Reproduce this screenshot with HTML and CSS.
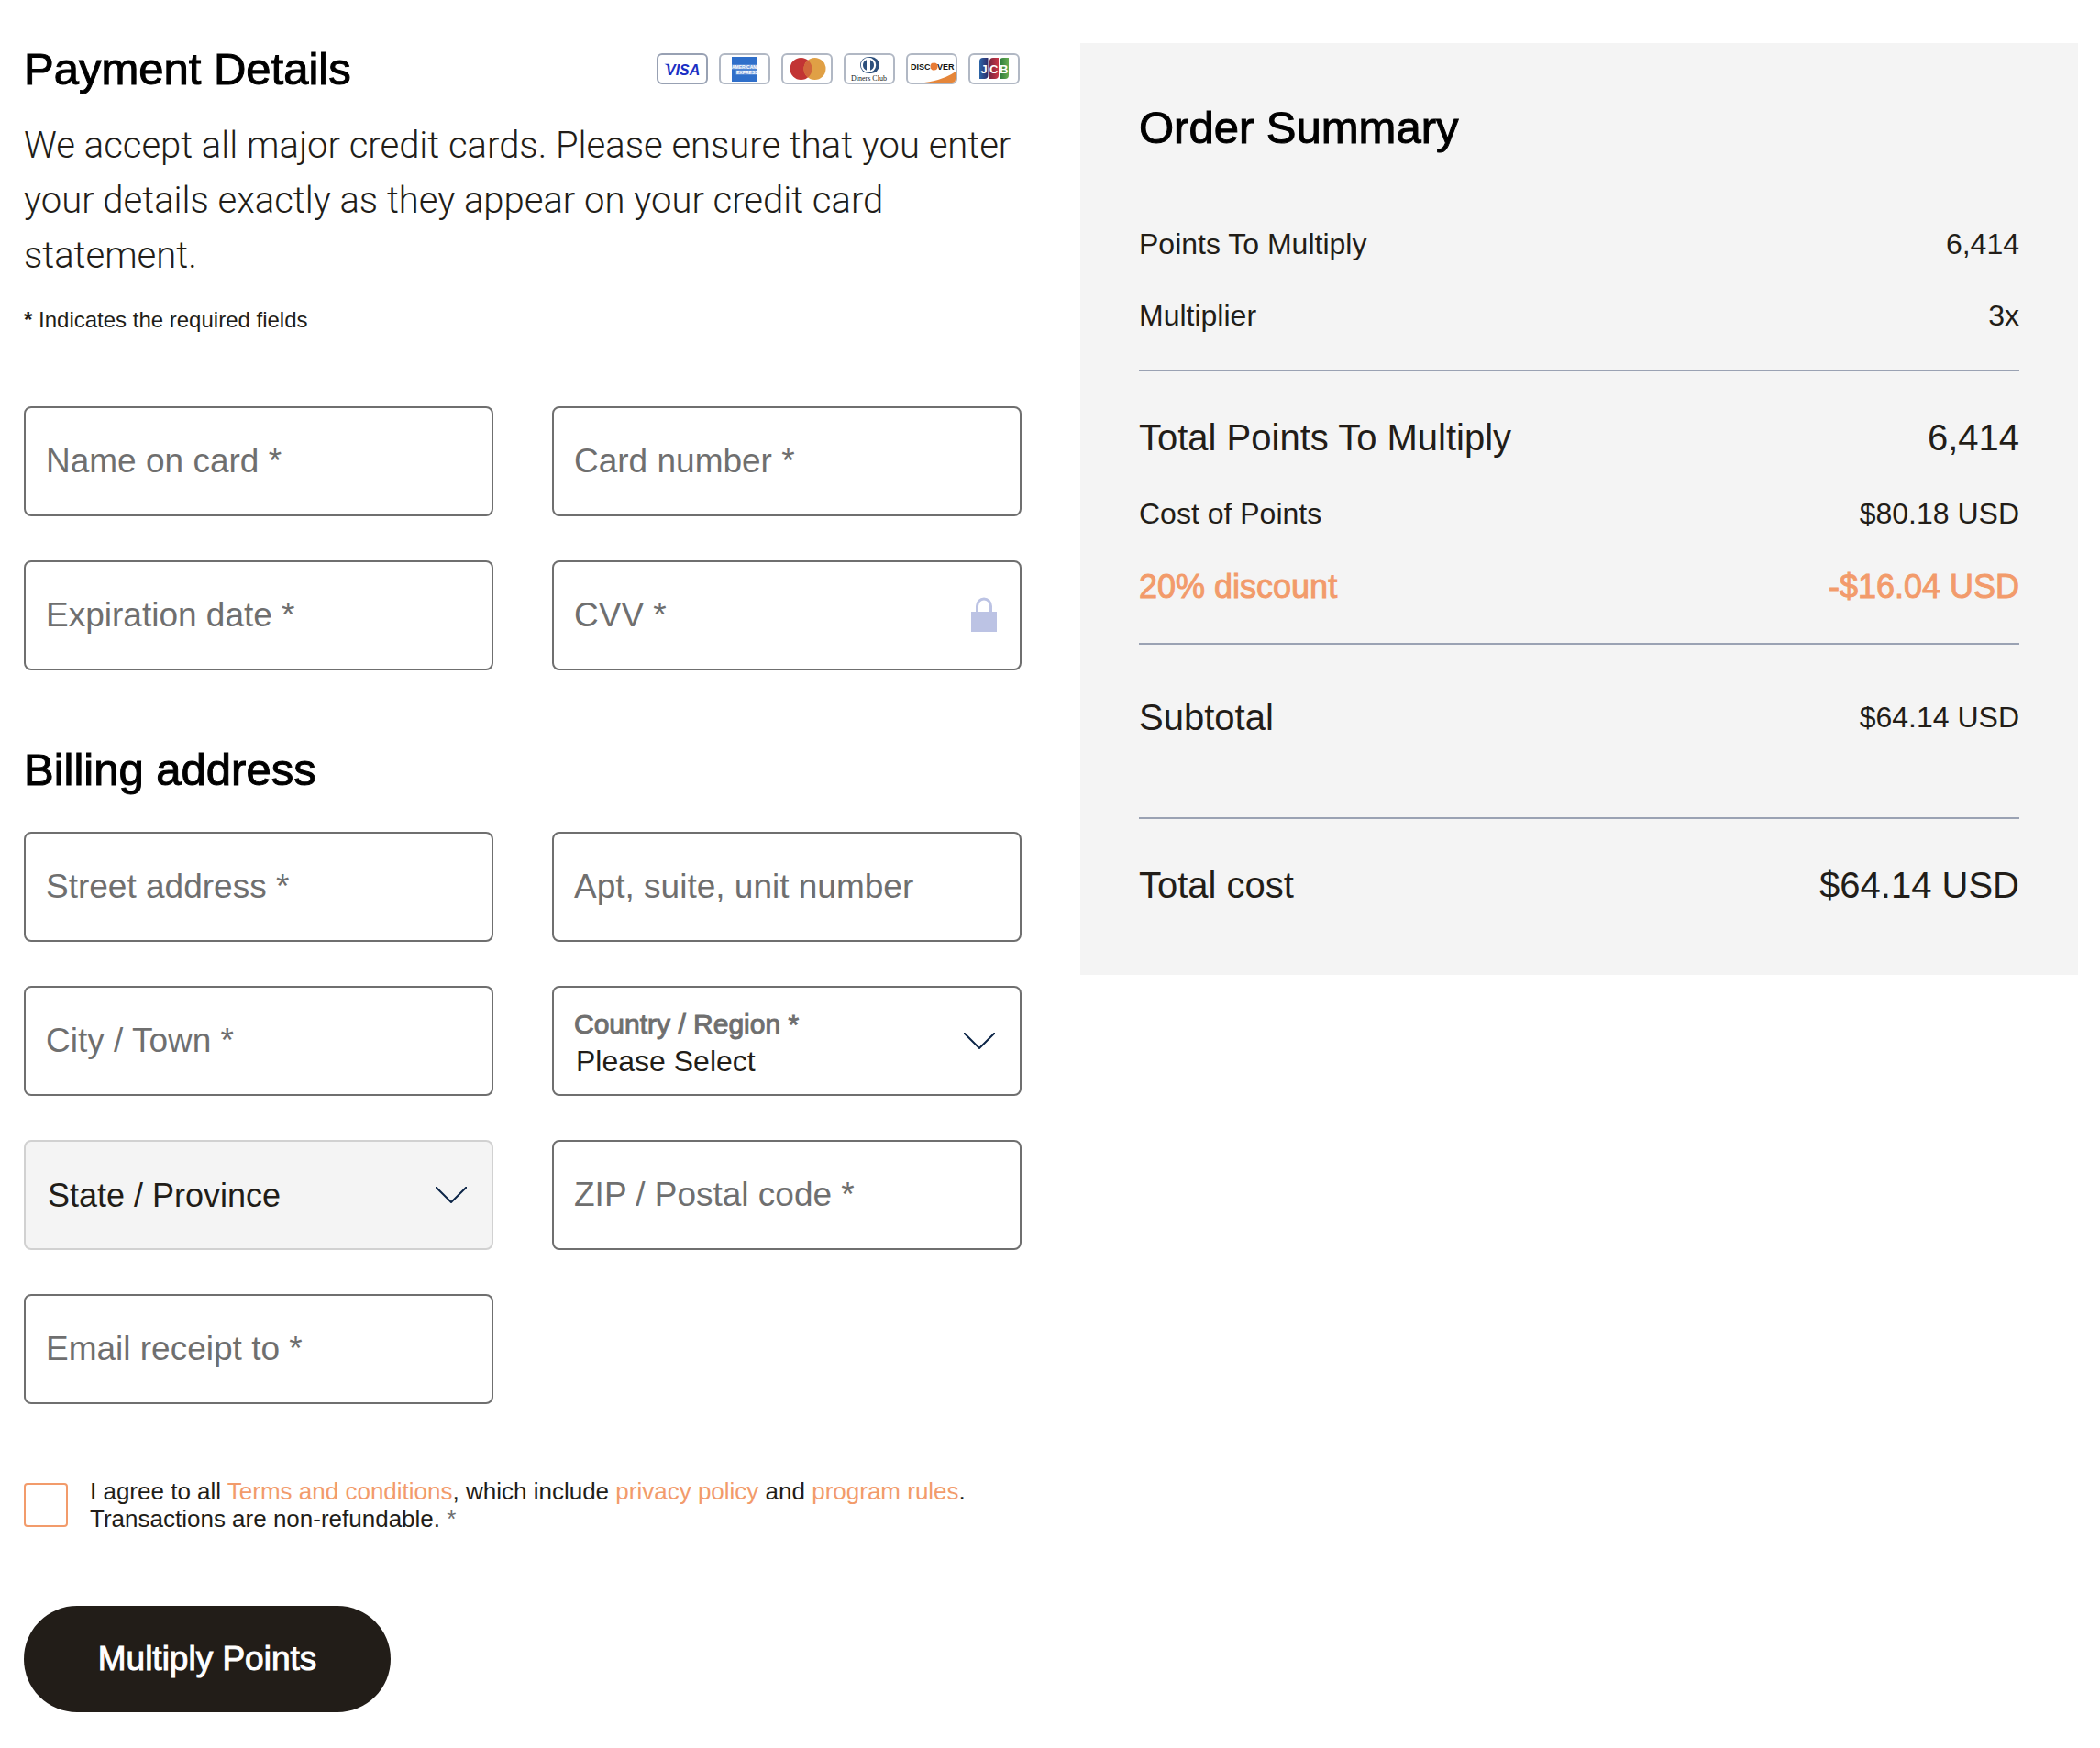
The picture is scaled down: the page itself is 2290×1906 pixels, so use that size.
FILE: index.html
```html
<!DOCTYPE html>
<html lang="en">
<head>
  <meta charset="UTF-8" />
  <meta name="viewport" content="width=device-width, initial-scale=1" />
  <title>Payment Details</title>
  <link rel="stylesheet" href="styles.css">
</head>
<body>
  <main class="checkout">
    <form class="payment">
      <header class="payment-header">
        <h2>Payment Details</h2>
        <ul class="cards">
          <li>
            <svg class="card" viewBox="0 0 56 34" role="img" aria-label="Visa">
              <rect class="card-frame card-frame-dark" x="1" y="1" width="54" height="32" rx="5" />
              <path d="M8.500 11.800h4.500l1.500 3z" fill="#1a2fc4" />
              <text x="10" y="23.500" font-size="16" font-weight="bold" font-style="italic" fill="#1a2fc4">VISA</text>
            </svg>
          </li>
          <li>
            <svg class="card" viewBox="0 0 56 34" role="img" aria-label="American Express">
              <rect class="card-frame" x="1" y="1" width="54" height="32" rx="5" />
              <rect x="14" y="4" width="28" height="27" fill="#2f6fca" />
              <rect x="14" y="12.500" width="27" height="5" fill="#fff" opacity=".35" />
              <rect x="18.500" y="18.500" width="23.500" height="5" fill="#fff" opacity=".35" />
              <text x="14" y="17" font-size="5" font-weight="bold" fill="#fff">AMERICAN</text>
              <text x="19" y="23" font-size="5" font-weight="bold" fill="#fff">EXPRESS</text>
            </svg>
          </li>
          <li>
            <svg class="card" viewBox="0 0 56 34" role="img" aria-label="Mastercard">
              <rect class="card-frame" x="1" y="1" width="54" height="32" rx="5" />
              <circle cx="21.500" cy="17" r="12" fill="#c23434" />
              <circle cx="36.500" cy="17" r="12" fill="#e0a045" />
              <path d="M29 7.600a12 12 0 0 1 0 18.800a12 12 0 0 1 0-18.800z" fill="#d1663b" />
            </svg>
          </li>
          <li>
            <svg class="card" viewBox="0 0 56 34" role="img" aria-label="Diners Club">
              <rect class="card-frame" x="1" y="1" width="54" height="32" rx="5" />
              <path d="M27 4h3a9 9 0 0 1 0 18h-3a9 9 0 0 1 0-18z" fill="#2c4f7c" />
              <circle cx="27" cy="13" r="8.200" fill="#fff" />
              <path d="M25 7.200a6.200 6.200 0 0 0 0 11.600zM29 7.200a6.200 6.200 0 0 1 0 11.600z" fill="#2c4f7c" />
              <text class="serif" x="8" y="29.500" font-size="8" fill="#222">Diners Club</text>
            </svg>
          </li>
          <li>
            <svg class="card" viewBox="0 0 56 34" role="img" aria-label="Discover">
              <rect class="card-frame" x="1" y="1" width="54" height="32" rx="5" />
              <path d="M20 32q22-3 34-12v8q0 4-4 4z" fill="#e5863a" />
              <text x="5" y="18" font-size="9" font-weight="bold" fill="#111">DISC</text>
              <text x="34" y="18" font-size="9" font-weight="bold" fill="#111">VER</text>
              <circle cx="30.500" cy="14.500" r="4" fill="#e87b35" />
            </svg>
          </li>
          <li>
            <svg class="card" viewBox="0 0 56 34" role="img" aria-label="JCB">
              <defs>
                <linearGradient id="jcbBlue"><stop stop-color="#2c66a8" /><stop offset="1" stop-color="#2d2a68" /></linearGradient>
                <linearGradient id="jcbRed"><stop stop-color="#7a2740" /><stop offset="1" stop-color="#cb3646" /></linearGradient>
                <linearGradient id="jcbGreen"><stop stop-color="#2b7a3c" /><stop offset="1" stop-color="#68ad50" /></linearGradient>
              </defs>
              <rect class="card-frame" x="1" y="1" width="54" height="32" rx="5" />
              <path d="M16 5h5.500v19q0 4-4 4h-5.500v-19q0-4 4-4z" fill="url(#jcbBlue)" />
              <path d="M27 5h6v19q0 4-4 4h-6v-19q0-4 4-4z" fill="url(#jcbRed)" />
              <path d="M38 5h6v19q0 4-4 4h-6v-19q0-4 4-4z" fill="url(#jcbGreen)" />
              <text x="13.500" y="21.500" font-size="13" font-weight="bold" fill="#fff">J</text>
              <text x="23" y="21.500" font-size="13" font-weight="bold" fill="#fff">C</text>
              <text x="34" y="21.500" font-size="13" font-weight="bold" fill="#fff">B</text>
            </svg>
          </li>
        </ul>
      </header>
      <p class="intro">We accept all major credit cards. Please ensure that you enter your details exactly as they appear on your credit card statement.</p>
      <p class="required-note"><b>*</b> Indicates the required fields</p>

      <div class="fields">
        <div class="field">
          <input type="text" id="cardName" placeholder=" " required />
          <label for="cardName">Name on card *</label>
        </div>
        <div class="field">
          <input type="text" id="cardNumber" inputmode="numeric" placeholder=" " required />
          <label for="cardNumber">Card number *</label>
        </div>
        <div class="field">
          <input type="text" id="expiration" placeholder=" " required />
          <label for="expiration">Expiration date *</label>
        </div>
        <div class="field">
          <input type="text" id="cvv" inputmode="numeric" placeholder=" " required />
          <label for="cvv">CVV *</label>
          <svg class="lock" viewBox="0 0 28 38" aria-hidden="true">
            <path d="M6.500 18V10a7.500 8 0 0 1 15 0v8" fill="none" stroke="#bcc3e4" stroke-width="3" />
            <rect y="16" width="28" height="22" fill="#bcc3e4" />
          </svg>
        </div>
      </div>

      <h2 class="billing-title">Billing address</h2>
      <div class="fields">
        <div class="field">
          <input type="text" id="street" placeholder=" " required />
          <label for="street">Street address *</label>
        </div>
        <div class="field">
          <input type="text" id="apt" placeholder=" " />
          <label for="apt">Apt, suite, unit number</label>
        </div>
        <div class="field">
          <input type="text" id="city" placeholder=" " required />
          <label for="city">City / Town *</label>
        </div>
        <div class="field field-labelled">
          <select id="country" required>
            <option value="">Please Select</option>
            <option>Canada</option>
            <option>United States</option>
          </select>
          <label for="country">Country / Region *</label>
          <svg class="chevron" viewBox="0 0 34 18" aria-hidden="true"><path d="M0 0l17 17L34 0" /></svg>
        </div>
        <div class="field">
          <select id="state" aria-label="State / Province" disabled>
            <option>State / Province</option>
          </select>
          <svg class="chevron" viewBox="0 0 34 18" aria-hidden="true"><path d="M0 0l17 17L34 0" /></svg>
        </div>
        <div class="field">
          <input type="text" id="zip" placeholder=" " required />
          <label for="zip">ZIP / Postal code *</label>
        </div>
        <div class="field">
          <input type="email" id="email" placeholder=" " required />
          <label for="email">Email receipt to *</label>
        </div>
      </div>

      <div class="agree">
        <input type="checkbox" id="agree" required />
        <label for="agree">I agree to all <a href="#terms">Terms and conditions</a>, which include <a href="#privacy">privacy policy</a> and <a href="#rules">program rules</a>.<br />Transactions are non-refundable. <span class="star">*</span></label>
      </div>
      <button type="submit" class="submit">Multiply Points</button>
    </form>

    <aside class="summary">
      <h2>Order Summary</h2>
      <dl class="group">
        <div class="row"><dt>Points To Multiply</dt><dd>6,414</dd></div>
        <div class="row"><dt>Multiplier</dt><dd>3x</dd></div>
      </dl>
      <dl class="group">
        <div class="row row-large"><dt>Total Points To Multiply</dt><dd>6,414</dd></div>
        <div class="row"><dt>Cost of Points</dt><dd>$80.18 USD</dd></div>
        <div class="row row-discount"><dt>20% discount</dt><dd>-$16.04 USD</dd></div>
      </dl>
      <dl class="group group-subtotal">
        <div class="row row-subtotal"><dt>Subtotal</dt><dd>$64.14 USD</dd></div>
      </dl>
      <dl class="group">
        <div class="row row-large"><dt>Total cost</dt><dd>$64.14 USD</dd></div>
      </dl>
    </aside>
  </main>
</body>
</html>
```
FILE: styles.css
```css
* { margin: 0; padding: 0; box-sizing: border-box; }
body {
  font-family: "Liberation Sans", Arial, sans-serif;
  background: #ffffff; color: #221d18;
}
.checkout {
  display: grid; grid-template-columns: 1fr 1fr; align-items: start;
  gap: 64px; padding: 47px 24px 39px 26px;
}
h2 {
  font-size: 49px; line-height: 56px; font-weight: normal; color: #000000;
  -webkit-text-stroke: 1px #000000;
}
a { color: #f29b6b; text-decoration: none; }
a:hover { text-decoration: underline; }

/* payment form */
.payment-header {
  display: flex; justify-content: space-between; align-items: center;
  margin-bottom: 26px;
}
.cards { display: flex; gap: 12px; padding-right: 2px; list-style: none; }
.card { display: block; width: 56px; height: 34px; }
.card-frame { fill: #ffffff; stroke: #b1b8c4; stroke-width: 2; }
.card-frame-dark { stroke: #98a1b3; }
.card .serif { font-family: "Liberation Serif", serif; }
.intro {
  font-family: Roboto, "Liberation Sans", sans-serif; font-weight: 300;
  font-size: 40px; line-height: 60px; margin-bottom: 22px;
}
.required-note { font-size: 24px; line-height: 36px; margin-bottom: 76px; }
.fields { display: grid; grid-template-columns: 1fr 1fr; gap: 48px 64px; }
.billing-title { margin: 80px 0 40px; }

.field { position: relative; }
.field input, .field select {
  display: block; width: 100%; height: 120px; padding: 0 23px;
  border: 2px solid #6f6f6f; border-radius: 8px; background: #ffffff;
  font-family: inherit; font-size: 36px; color: #221d18;
  appearance: none;
}
.field select:disabled { background: #f4f4f4; border-color: #d1d1d1; opacity: 1; }
.field label {
  position: absolute; left: 24px; top: 36px;
  font-size: 37px; line-height: 48px; color: #6f6f6f;
  pointer-events: none;
}
.field input:focus + label, .field input:not(:placeholder-shown) + label {
  top: 24px; font-size: 30px; line-height: 36px;
}
.field select { padding-left: 24px; }
.field-labelled select { padding-top: 44px; font-size: 32px; }
.field-labelled label {
  top: 24px; font-size: 30px; line-height: 36px;
  -webkit-text-stroke: 1px #6f6f6f;
}
.chevron {
  position: absolute; right: 29px; top: 51px; width: 34px; height: 18px;
  fill: none; stroke: #0c2547; stroke-width: 2; pointer-events: none;
}
.lock { position: absolute; right: 27px; top: 40px; width: 28px; height: 38px; }

.agree { display: flex; align-items: center; gap: 24px; margin: 80px 0; }
.agree input {
  flex: none; width: 48px; height: 48px; appearance: none;
  border: 2px solid #f29b6b; border-radius: 4px; background: #ffffff;
}
.agree input:checked { background: #f29b6b; }
.agree label { font-size: 26px; line-height: 30px; }
.star { color: #6f6f6f; }
.submit {
  min-width: 400px; height: 116px; padding: 0 64px;
  border: none; border-radius: 58px; background: #221d18; color: #ffffff;
  font-family: inherit; font-size: 37px; -webkit-text-stroke: 1px #ffffff;
  cursor: pointer;
}

/* order summary */
.summary { padding: 64px 64px 34px; background: #f4f4f4; }
.summary h2 { margin-bottom: 75px; }
.group {
  display: flex; flex-direction: column; gap: 30px;
  padding-bottom: 35px;
}
.group + .group { border-top: 2px solid #9aa2b3; padding-top: 43px; }
.row {
  display: flex; justify-content: space-between; align-items: center;
  font-size: 32px; line-height: 48px;
}
.row-large, .row-subtotal dt { font-size: 40px; line-height: 58px; }
.row-discount {
  font-size: 36px; line-height: 52px; color: #f29b6b;
  -webkit-text-stroke: 1px #f29b6b;
}
.group + .group-subtotal { padding: 50px 0 80px; }

@media (max-width: 1400px) {
  .checkout { grid-template-columns: 1fr; }
}
```
